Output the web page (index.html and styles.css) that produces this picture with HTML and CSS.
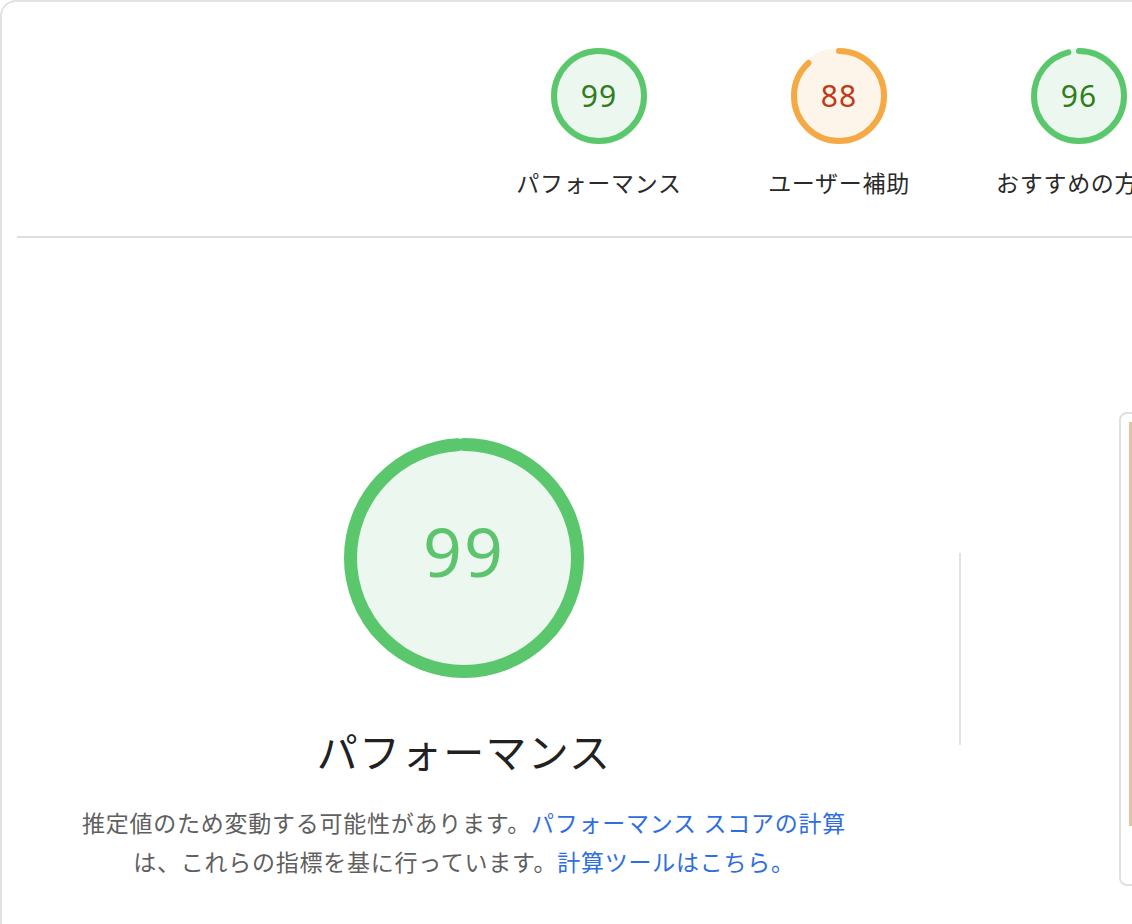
FILE: index.html
```html
<!DOCTYPE html>
<html lang="ja">
<head>
    <meta charset="UTF-8">
    <title>Lighthouse レポート</title>
    <link rel="stylesheet" href="styles.css">
</head>
<body>
    <div class="report">
        <!-- Score header -->
        <div class="scores-header">
            <div class="gauge-wrap pass">
                <svg class="gauge" viewBox="0 0 96 96">
                    <circle class="gauge-base" cx="48" cy="48" r="45"></circle>
                    <circle class="gauge-arc" cx="48" cy="48" r="45" stroke-dasharray="279.9 282.7"></circle>
                </svg>
                <span class="gauge-value">99</span>
                <div class="gauge-label">パフォーマンス</div>
            </div>
            <div class="gauge-wrap average">
                <svg class="gauge" viewBox="0 0 96 96">
                    <circle class="gauge-base" cx="48" cy="48" r="45"></circle>
                    <circle class="gauge-arc" cx="48" cy="48" r="45" stroke-dasharray="248.8 282.7"></circle>
                </svg>
                <span class="gauge-value">88</span>
                <div class="gauge-label">ユーザー補助</div>
            </div>
            <div class="gauge-wrap pass">
                <svg class="gauge" viewBox="0 0 96 96">
                    <circle class="gauge-base" cx="48" cy="48" r="45"></circle>
                    <circle class="gauge-arc" cx="48" cy="48" r="45" stroke-dasharray="271.4 282.7"></circle>
                </svg>
                <span class="gauge-value">96</span>
                <div class="gauge-label">おすすめの方法</div>
            </div>
        </div>

        <!-- Performance summary -->
        <div class="perf-section">
            <div class="perf-summary">
                <div class="big-gauge">
                    <svg class="gauge" viewBox="0 0 240 240">
                        <circle class="gauge-base" cx="120" cy="120" r="113.5"></circle>
                        <circle class="gauge-arc" cx="120" cy="120" r="113.5" stroke-dasharray="706 713.1"></circle>
                    </svg>
                    <span class="big-value">99</span>
                </div>
                <h2 class="perf-title">パフォーマンス</h2>
                <p class="perf-desc">
                    推定値のため変動する可能性があります。<a href="#">パフォーマンス スコアの計算</a>は、これらの指標を基に行っています。<a href="#">計算ツールはこちら。</a>
                </p>
            </div>
            <div class="divider"></div>
            <div class="thumb">
                <div class="thumb-image"></div>
            </div>
        </div>
    </div>
</body>
</html>
```

FILE: styles.css
```css
* {
    margin: 0;
    padding: 0;
    box-sizing: border-box;
}

body {
    background-color: #fff;
    font-family: "Noto Sans", "Noto Sans CJK JP", sans-serif;
    color: #212121;
    overflow: hidden;
    width: 1132px;
    height: 924px;
}

.report {
    width: 1300px;
    height: 1100px;
    border: 2px solid #e2e2e2;
    border-radius: 16px;
}

/* Header gauges */
.scores-header {
    display: flex;
    margin-left: 15px;
    padding: 46px 0 38px 462px;
    border-bottom: 2px solid #dedede;
}

.gauge-wrap {
    flex: none;
    width: 240px;
    position: relative;
    display: flex;
    flex-direction: column;
    align-items: center;
}

.gauge-wrap .gauge {
    width: 96px;
    height: 96px;
}

.gauge-base {
    stroke-width: 6;
}

.gauge-arc {
    fill: none;
    stroke-width: 6;
    stroke-linecap: round;
    transform: rotate(-90deg);
    transform-origin: center;
}

.big-gauge .gauge-arc,
.big-gauge .gauge-base {
    stroke-width: 13;
}

.pass .gauge-base,
.big-gauge .gauge-base {
    fill: #ecf8ef;
    stroke: #ecf8ef;
}

.pass .gauge-arc,
.big-gauge .gauge-arc {
    stroke: #5ac76c;
}

.average .gauge-base {
    fill: #fef5ea;
    stroke: #fef5ea;
}

.average .gauge-arc {
    stroke: #f4a945;
}

.gauge-value {
    position: absolute;
    top: 0;
    left: 0;
    width: 100%;
    height: 96px;
    line-height: 96px;
    text-align: center;
    font-size: 30px;
    letter-spacing: 1px;
}

.pass .gauge-value {
    color: #2f7d1c;
}

.average .gauge-value {
    color: #c13a16;
}

.gauge-label {
    margin-top: 24px;
    font-size: 23px;
    letter-spacing: 0.7px;
    line-height: 30px;
    color: #2a2a2a;
    white-space: nowrap;
}

/* Performance summary */
.perf-section {
    display: flex;
    align-items: flex-start;
    padding-left: 15px;
}

.perf-summary {
    flex: none;
    width: 894px;
    padding-top: 200px;
    display: flex;
    flex-direction: column;
    align-items: center;
}

.big-gauge {
    position: relative;
    width: 240px;
    height: 240px;
}

.big-gauge .gauge {
    width: 240px;
    height: 240px;
}

.big-value {
    position: absolute;
    top: 0;
    left: 0;
    width: 100%;
    line-height: 226px;
    text-align: center;
    font-size: 68px;
    letter-spacing: 2px;
    color: #5cc46d;
}

.perf-title {
    margin-top: 48px;
    font-size: 41px;
    letter-spacing: 1.2px;
    font-weight: normal;
    line-height: 52px;
    color: #212121;
}

.perf-desc {
    width: 800px;
    margin-top: 26px;
    font-size: 23px;
    letter-spacing: 0.75px;
    line-height: 39px;
    text-align: center;
    color: #5f5f5f;
}

.perf-desc a {
    color: #2f6ee0;
    text-decoration: none;
}

.divider {
    flex: none;
    width: 2px;
    height: 192px;
    margin-left: 48px;
    margin-top: 315px;
    background-color: #e2e2e2;
}

.thumb {
    flex: none;
    width: 220px;
    height: 474px;
    margin-left: 158px;
    margin-top: 174px;
    padding: 8px;
    border: 2px solid #e0e0e0;
    border-radius: 8px;
}

.thumb-image {
    height: 404px;
    background-color: #e3c3a3;
}
```
